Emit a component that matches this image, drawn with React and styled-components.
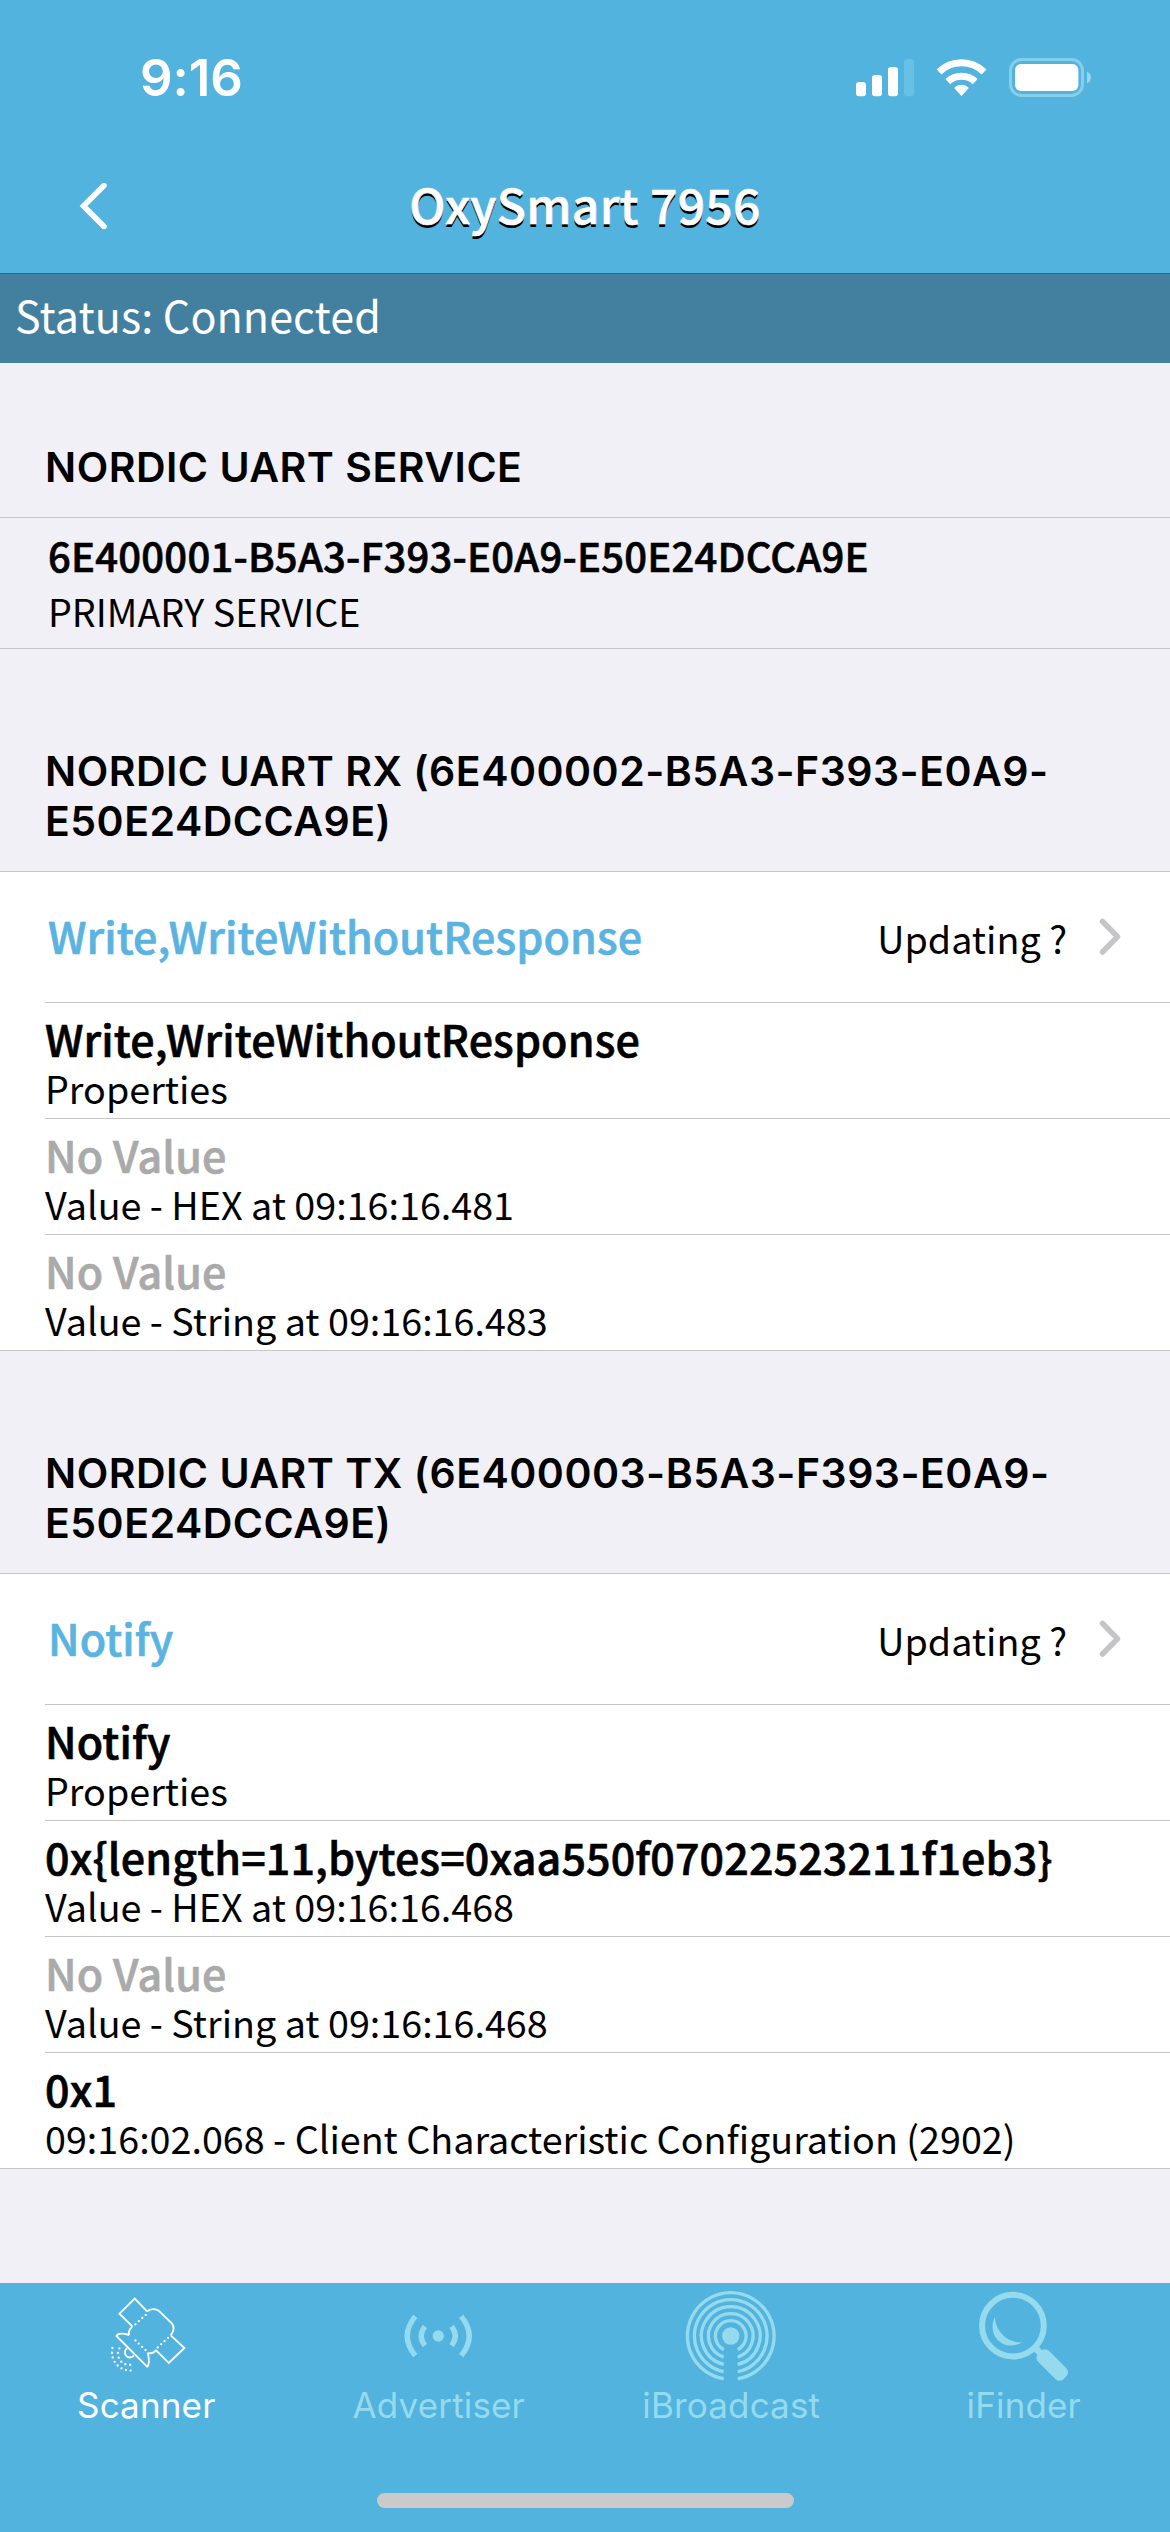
import React from "react";
import styled, { createGlobalStyle, css } from "styled-components";

const sans = `"Noto Sans CJK SC", "Noto Sans", sans-serif`;
const system = `Inter, "Liberation Sans", sans-serif`;
const colors = {
  brand: "#52b3de",
  brandDark: "#4380a0",
  link: "#5ab3e0",
  canvas: "#f1f0f6",
  line: "#c6c6c8",
  muted: "#aaaaaa",
  inactive: "#96daed",
};

const semibold = css`
  font-weight: 500;
  -webkit-text-stroke: 0.65px currentColor;
`;

const GlobalStyle = createGlobalStyle`
  *, *::before, *::after { box-sizing: border-box; }
  body { margin: 0; background: ${colors.canvas}; }
`;

const Screen = styled.div`
  display: flex;
  flex-direction: column;
  width: 1170px;
  height: 2532px;
  overflow: hidden;
  background: ${colors.canvas};
  color: #000;
  font-family: ${sans};
  white-space: nowrap;
`;

const StatusBar = styled.div`
  display: flex;
  flex: none;
  align-items: center;
  justify-content: space-between;
  height: 141px;
  padding: 14px 78px 0 140px;
  background: ${colors.brand};
  color: #fff;
`;

const Clock = styled.time`
  font: 600 51px/60px ${system};
  letter-spacing: -0.1px;
`;

const NavBar = styled.header`
  display: grid;
  flex: none;
  grid-template-columns: 200px 1fr 200px;
  align-items: center;
  height: 132px;
  background: ${colors.brand};
`;

const BackButton = styled.button`
  display: flex;
  width: 120px;
  height: 80px;
  padding: 16px 0 0 79px;
  border: 0;
  background: none;
`;

const Title = styled.h1`
  margin: 0;
  padding-bottom: 8px;
  font: 500 48px/70px ${sans};
  ${semibold}
  letter-spacing: 0.3px;
  text-align: center;
  color: #fff;
  text-shadow: 0 3px 0 #000;
`;

const ConnectionStrip = styled.div`
  flex: none;
  height: 90px;
  padding: 10px 15px 0;
  border-top: 1px solid #2d6480;
  background: ${colors.brandDark};
  color: #fff;
  font-size: 43px;
  line-height: 60px;
  letter-spacing: 0.08px;
`;

const Content = styled.main`
  flex: 1;
  min-height: 0;
`;

const GroupHeader = styled.h2`
  display: flex;
  align-items: flex-end;
  height: ${(p) => (p.$first ? 154 : 222)}px;
  margin: 0;
  padding: 0 45px 25px;
  font: 580 41px/50px ${system};
  letter-spacing: 0.5px;
`;

const ServiceRow = styled.div`
  height: 132px;
  padding: 10px 48px 0;
  border: solid ${colors.line};
  border-width: 1px 0;
  line-height: 55px;
`;

const ServiceId = styled.div`
  ${semibold}
  font-size: 40px;
  letter-spacing: 0.23px;
`;

const Caption = styled.div`
  font-size: 37.7px;
  line-height: ${(p) => p.$line || 49}px;
`;

const Group = styled.section`
  border: solid ${colors.line};
  border-width: 1px 0;
  background: #fff;
`;

const ActionRow = styled.div`
  display: flex;
  align-items: center;
  height: 131px;
  margin-left: 45px;
  padding: 0 48px 0 3px;
  border-bottom: 1px solid ${colors.line};
`;

const ActionName = styled.span`
  ${semibold}
  flex: 1;
  padding-bottom: 4px;
  font-size: 43px;
  line-height: 60px;
  letter-spacing: 0.1px;
  color: ${colors.link};
`;

const ActionState = styled.span`
  margin-right: 31px;
  padding-top: 1px;
  font-size: 37.7px;
  line-height: 56px;
`;

const ValueRow = styled.div`
  height: 116px;
  margin-left: 45px;
  padding-top: 10px;
  border-bottom: 1px solid ${colors.line};

  &:last-child {
    height: 115px;
    border-bottom: 0;
  }
`;

const Value = styled.div`
  ${semibold}
  font-size: 43px;
  line-height: 50px;
  letter-spacing: 0.13px;
  color: ${(p) => (p.$empty ? colors.muted : "#000")};
`;

const TabBar = styled.nav`
  display: grid;
  flex: none;
  grid-template-columns: repeat(4, 1fr);
  grid-template-rows: 210px 15px;
  height: 249px;
  background: ${colors.brand};
`;

const Tab = styled.a`
  display: flex;
  flex-direction: column;
  align-items: center;
  padding-top: 4px;
  color: ${(p) => (p.$active ? "#fff" : colors.inactive)};
  font: 400 35px/37px ${system};
  letter-spacing: 0.15px;
`;

const HomeIndicator = styled.div`
  grid-column: 1 / -1;
  justify-self: center;
  width: 417px;
  height: 15px;
  border-radius: 8px;
  background: #cacaca;
`;

const SystemIcons = () => (
  <svg width="240" height="42" viewBox="852 57 240 42" fill="#fff">
    <rect x="856" y="82" width="10" height="14.3" rx="3" />
    <rect x="872" y="75" width="10" height="21.3" rx="3" />
    <rect x="888" y="67" width="10" height="29.3" rx="3" />
    <rect x="904" y="59" width="10" height="37.3" rx="3" fill="#66c1e5" />
    <path d="M961.5 96 L954.6 88.6 Q954 87.8 954.8 87.2 A10.5 10.5 0 0 1 968.2 87.2 Q969 87.8 968.4 88.6 Z" />
    <path d="M947.8 81.6 A20 20 0 0 1 975.2 81.6" fill="none" stroke="#fff" strokeWidth="7" />
    <path d="M939 72 A32 32 0 0 1 984 72" fill="none" stroke="#fff" strokeWidth="7" />
    <rect x="1010.5" y="59.5" width="72" height="36" rx="11" fill="none" stroke="#86cfe9" strokeWidth="3" />
    <rect x="1015" y="64" width="63.4" height="27" rx="6" />
    <path d="M1087 71.5 C1092.4 74 1092.4 81 1087 83.5 Z" fill="#97d6ed" />
  </svg>
);

const BackIcon = () => (
  <svg width="30" height="46" viewBox="0 0 30 46" fill="none" stroke="#fff" strokeWidth="5.5">
    <path d="M25 2.5 L4.5 23 L25 43.5" strokeLinejoin="miter" strokeLinecap="round" />
  </svg>
);

const Disclosure = () => (
  <svg width="24" height="38" viewBox="0 0 24 38" fill="none" stroke="#c5c5c7" strokeWidth="5.5">
    <path d="M4.5 3.5 L19.5 18.8 L4.5 34" strokeLinecap="round" strokeLinejoin="round" />
  </svg>
);

const ScannerIcon = () => (
  <svg width="100" height="100" viewBox="108.75 51 300 300" fill="none" stroke="#fff" strokeWidth="5.6">
    <path d="M262 124 L225 86 L179 131 L218 169" />
    <path d="M218 169 Q204 182 208 195 M262 124 Q282 111 299 124 L337 161 Q348 175 333 196" />
    <path d="M333 196 L374 234 L327 279 L289 241 Q279 252 264 250" />
    <path d="M208 195 Q176 185 170 198 L262 290 Q272 283 264 248" strokeLinejoin="round" />
    <path d="M202 235 A15 15 0 1 0 222 257" />
    <g strokeLinecap="round" strokeWidth="7">
      <path d="M227 163 L262 131 M227 211 L258 241 M294 232 L333 196" strokeDasharray="0 14" />
      <path d="M179 235 A33 33 0 0 0 224 280" strokeDasharray="0 14.3" />
      <path d="M158 234 A55 55 0 0 0 225 300" strokeDasharray="0 14.3" />
    </g>
  </svg>
);

const AdvertiserIcon = () => (
  <svg width="100" height="100" viewBox="176.25 51 300 300" fill="none" stroke="currentColor" strokeWidth="16">
    <circle cx="324" cy="198" r="17" fill="currentColor" stroke="none" />
    <path d="M284 169 Q262 198 284 227 M364 169 Q386 198 364 227" />
    <path d="M255 139 Q207 198 255 257 M393 139 Q441 198 393 257" />
  </svg>
);

const BroadcastIcon = () => (
  <svg width="100" height="100" viewBox="183.75 51 300 300" fill="none" stroke="currentColor" strokeWidth="10">
    <circle cx="333" cy="198" r="26" fill="currentColor" stroke="none" />
    {[46, 67, 88, 109, 130].map((r) => {
      const drop = Math.sqrt(r * r - 21 * 21);
      return <path key={r} d={`M312 ${198 + drop} A${r} ${r} 0 1 1 354 ${198 + drop}`} />;
    })}
  </svg>
);

const FinderIcon = () => (
  <svg width="100" height="100" viewBox="161.25 51 300 300" fill="currentColor">
    <circle cx="278" cy="167" r="92.5" fill="none" stroke="currentColor" strokeWidth="18" />
    <path d="M224 141 C226 185 262 220 306 217 C247 249 198 195 224 141 Z" />
    <path d="M340 229 L362 251" stroke="currentColor" strokeWidth="20" />
    <rect x="342" y="262" width="108" height="46" rx="17" transform="rotate(45 396 285)" />
  </svg>
);

const characteristics = [
  {
    id: "rx",
    heading: ["NORDIC UART RX (6E400002-B5A3-F393-E0A9-", "E50E24DCCA9E)"],
    action: "Write,WriteWithoutResponse",
    rows: [
      { value: "Write,WriteWithoutResponse", caption: "Properties" },
      { value: "No Value", caption: "Value - HEX at 09:16:16.481", empty: true },
      { value: "No Value", caption: "Value - String at 09:16:16.483", empty: true },
    ],
  },
  {
    id: "tx",
    heading: ["NORDIC UART TX (6E400003-B5A3-F393-E0A9-", "E50E24DCCA9E)"],
    action: "Notify",
    rows: [
      { value: "Notify", caption: "Properties" },
      { value: "0x{length=11,bytes=0xaa550f07022523211f1eb3}", caption: "Value - HEX at 09:16:16.468" },
      { value: "No Value", caption: "Value - String at 09:16:16.468", empty: true },
      { value: "0x1", caption: "09:16:02.068 - Client Characteristic Configuration (2902)" },
    ],
  },
];

const tabs = [
  { label: "Scanner", Icon: ScannerIcon, active: true },
  { label: "Advertiser", Icon: AdvertiserIcon },
  { label: "iBroadcast", Icon: BroadcastIcon },
  { label: "iFinder", Icon: FinderIcon },
];

export default function App() {
  return (
    <Screen>
      <GlobalStyle />
      <StatusBar>
        <Clock>9:16</Clock>
        <SystemIcons />
      </StatusBar>
      <NavBar>
        <BackButton aria-label="Back">
          <BackIcon />
        </BackButton>
        <Title>OxySmart 7956</Title>
      </NavBar>
      <ConnectionStrip>Status: Connected</ConnectionStrip>
      <Content>
        <GroupHeader $first>NORDIC UART SERVICE</GroupHeader>
        <ServiceRow>
          <ServiceId>6E400001-B5A3-F393-E0A9-E50E24DCCA9E</ServiceId>
          <Caption $line={55}>PRIMARY SERVICE</Caption>
        </ServiceRow>
        {characteristics.map((item) => (
          <React.Fragment key={item.id}>
            <GroupHeader>
              <span>
                {item.heading[0]}
                <br />
                {item.heading[1]}
              </span>
            </GroupHeader>
            <Group>
              <ActionRow>
                <ActionName>{item.action}</ActionName>
                <ActionState>Updating ?</ActionState>
                <Disclosure />
              </ActionRow>
              {item.rows.map((row) => (
                <ValueRow key={row.caption}>
                  <Value $empty={row.empty}>{row.value}</Value>
                  <Caption>{row.caption}</Caption>
                </ValueRow>
              ))}
            </Group>
          </React.Fragment>
        ))}
      </Content>
      <TabBar>
        {tabs.map(({ label, Icon, active }) => (
          <Tab key={label} $active={active}>
            <Icon />
            {label}
          </Tab>
        ))}
        <HomeIndicator />
      </TabBar>
    </Screen>
  );
}
